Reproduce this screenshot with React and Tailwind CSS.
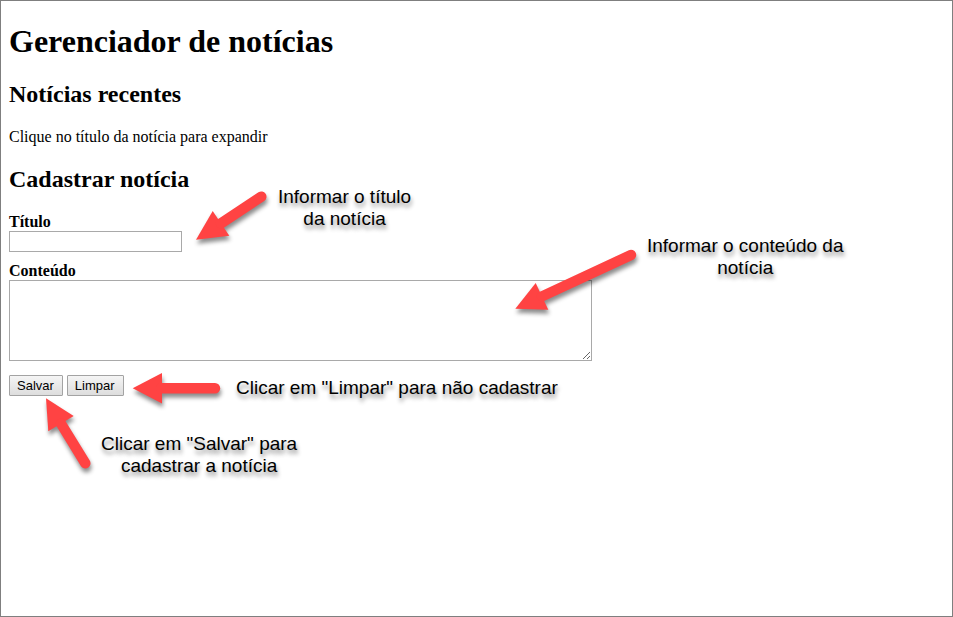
const serif = "font-['Liberation_Serif','Times_New_Roman',serif]";

function Arrow({ className = "", width, height, head, shaft }) {
  return (
    <svg
      aria-hidden="true"
      className={`shrink-0 overflow-visible drop-shadow-[1px_4px_2px_rgba(0,0,0,0.45)] ${className}`}
      width={width}
      height={height}
      viewBox={`0 0 ${width} ${height}`}
    >
      <path d={head} fill="#ff4343" />
      <path d={shaft} stroke="#ff4343" strokeWidth="10.4" strokeLinecap="round" fill="none" />
    </svg>
  );
}

function Callout({ className, arrow, children }) {
  return (
    <div className={`pointer-events-none absolute flex gap-2 ${className}`}>
      {arrow}
      <p className="text-center font-['Liberation_Sans',Arial,sans-serif] text-[19px] leading-[22px] whitespace-nowrap text-black [text-shadow:1px_4px_4px_rgba(0,0,0,0.45)]">
        {children}
      </p>
    </div>
  );
}

function FormButton({ type, children }) {
  return (
    <button
      type={type}
      className="h-[21px] rounded-[1px] border border-[#a3a3a3] bg-linear-to-b from-[#f5f5f5] to-[#dddddd] pr-2 pl-[7px] font-['Liberation_Sans',Arial,sans-serif] text-[13px] leading-[19px] text-black"
    >
      {children}
    </button>
  );
}

export default function App() {
  return (
    <main
      className={`relative min-h-screen border border-[#7f7f7f] bg-white px-2 pt-[22px] text-base leading-[18px] text-black ${serif}`}
    >
      <h1 className="text-[32px] leading-[37px] font-bold">Gerenciador de notícias</h1>

      <section className="mt-[21px]">
        <h2 className="text-2xl leading-[27px] font-bold">Notícias recentes</h2>
        <p className="mt-5">Clique no título da notícia para expandir</p>
      </section>

      <section className="mt-5">
        <h2 className="text-2xl leading-[27px] font-bold">Cadastrar notícia</h2>
        <form className="mt-5 flex flex-col items-start" onSubmit={(e) => e.preventDefault()}>
          <label htmlFor="titulo" className="font-bold">
            Título
          </label>
          <input
            id="titulo"
            type="text"
            className="h-[21px] w-[173px] border border-[#a9a9a9] bg-white px-px text-[13px] outline-none"
          />
          <label htmlFor="conteudo" className="mt-[10px] font-bold">
            Conteúdo
          </label>
          <textarea
            id="conteudo"
            className="h-[81px] w-[583px] resize border border-[#a9a9a9] bg-white p-[2px] text-[13px] outline-none"
          />
          <div className="mt-[14px] flex gap-1">
            <FormButton type="submit">Salvar</FormButton>
            <FormButton type="reset">Limpar</FormButton>
          </div>
        </form>
      </section>

      <Callout
        className="top-[185px] left-[194px] items-start"
        arrow={
          <Arrow
            className="mt-1"
            width={75}
            height={54}
            head="M1 49.7 17.7 21 34.3 45.7Z"
            shaft="M26 33.4 66.3 6.7"
          />
        }
      >
        Informar o título
        <br />
        da notícia
      </Callout>

      <Callout
        className="top-[234px] left-[513px] items-start"
        arrow={
          <Arrow
            className="mt-3"
            width={125}
            height={64}
            head="M1.3 61.7 21.7 36 34.3 62.7Z"
            shaft="M28 49.4 117 8"
          />
        }
      >
        Informar o conteúdo da
        <br />
        notícia
      </Callout>

      <Callout
        className="top-[371px] left-[131px] items-center"
        arrow={<Arrow width={96} height={32} head="M.7 16.3 30 1V31.5Z" shaft="M29 16.3H83" />}
      >
        Clicar em "Limpar" para não cadastrar
      </Callout>

      <Callout
        className="top-[396px] left-[44px] items-end"
        arrow={<Arrow width={48} height={80} head="M1 1.3 28.7 19 3.3 34.3Z" shaft="M16 26.6 40.3 66.3" />}
      >
        Clicar em "Salvar" para
        <br />
        cadastrar a notícia
      </Callout>
    </main>
  );
}
